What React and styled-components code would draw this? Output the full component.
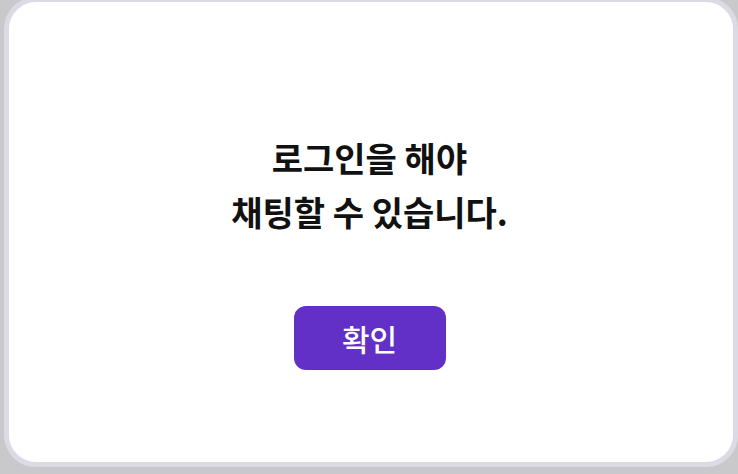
import React from "react";
import styled, { createGlobalStyle } from "styled-components";

const GlobalStyle = createGlobalStyle`
  html, body {
    margin: 0;
    padding: 0;
    background: #c9c9cb;
    overflow: hidden;
  }
  body {
    font-family: "Noto Sans CJK KR", "Noto Sans", sans-serif;
  }
`;

const Frame = styled.div`
  width: 738px;
  height: 474px;
  overflow: hidden;
`;

const Card = styled.div`
  box-sizing: border-box;
  width: 734px;
  height: 470px;
  margin: -3px 0 0 4px;
  border: 5px solid #dcdbe5;
  border-radius: 32px;
  background: #ffffff;
  display: flex;
  flex-direction: column;
  align-items: center;
  padding: 129px 3px 0 0;
`;

const Message = styled.p`
  margin: 0;
  text-align: center;
  font-size: 34px;
  font-weight: 700;
  line-height: 54px;
  color: #111111;
`;

const ConfirmButton = styled.button`
  margin-top: 67px;
  width: 152px;
  height: 64px;
  border: none;
  border-radius: 12px;
  background: #6230c6;
  color: #ffffff;
  font-family: inherit;
  font-size: 30px;
  font-weight: 500;
  cursor: pointer;
`;

const App = () => {
  return (
    <>
      <GlobalStyle />
      <Frame>
        <Card>
          <Message>
            로그인을 해야
            <br />
            채팅할 수 있습니다.
          </Message>
          <ConfirmButton>확인</ConfirmButton>
        </Card>
      </Frame>
    </>
  );
};

export default App;
